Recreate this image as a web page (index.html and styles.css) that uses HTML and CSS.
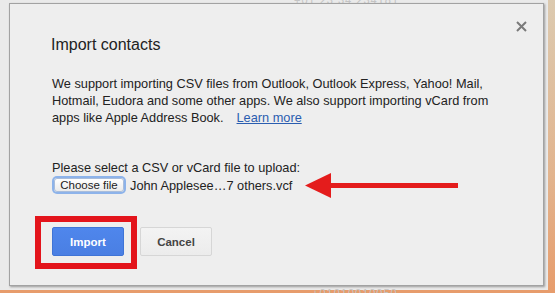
FILE: index.html
```html
<!DOCTYPE html>
<html lang="en">
<head>
<meta charset="utf-8">
<title>Import contacts</title>
<link rel="stylesheet" href="styles.css">
</head>
<body>
<div class="screen">
  <div class="canvas">
    <div class="bg-text bg-top">+01 23 34 234181</div>
    <div class="bg-text bg-bottom">+01010010050</div>
  </div>
  <div class="edge"></div>

  <div class="dialog" role="dialog" aria-labelledby="dlg-title">
    <div class="head">
      <h1 id="dlg-title" class="title">Import contacts</h1>
      <button class="close" aria-label="Close">
        <svg viewBox="0 0 11 11" width="11" height="11"><path d="M1 1 L10 10 M10 1 L1 10" stroke="#7a7a7a" stroke-width="2" fill="none"/></svg>
      </button>
    </div>
    <p class="desc">We support importing CSV files from Outlook, Outlook Express, Yahoo! Mail, Hotmail, Eudora and some other apps. We also support importing vCard from apps like Apple Address Book.<span class="spacer"></span><a class="learn" href="#">Learn more</a></p>
    <p class="select-label">Please select a CSV or vCard file to upload:</p>
    <div class="file-row">
      <span class="choose">Choose file</span>
      <span class="file-name">John Applesee…7 others.vcf</span>
    </div>
    <div class="actions">
      <button class="btn btn-primary">Import</button>
      <button class="btn btn-default">Cancel</button>
    </div>

    <div class="mark-box"></div>
    <svg class="mark-arrow" viewBox="0 0 165 32" width="165" height="32">
      <polygon points="5,16.5 31,4 31,29" fill="#e41c1c"/>
      <rect x="29" y="14" width="129" height="5" fill="#e41c1c"/>
    </svg>
  </div>
</div>
</body>
</html>
```

FILE: styles.css
```css
* { box-sizing: border-box; }

html, body {
  margin: 0;
  padding: 0;
  background: #e9e9e9;
}

.screen {
  position: relative;
  width: 555px;
  height: 293px;
  display: flex;
  overflow: hidden;
  font-family: "Liberation Sans", Arial, sans-serif;
}

.canvas {
  flex: 1;
  display: flex;
  flex-direction: column;
  justify-content: space-between;
  background: #eaeaea;
  border-bottom: 3px solid #e79c6c;
}

.edge {
  width: 7px;
  background: linear-gradient(to bottom, #dccab0 0%, #e2b48e 60%, #e79c6c 100%);
}

.bg-text {
  color: #c4c4c4;
  font-size: 11px;
  letter-spacing: 1px;
  padding-left: 294px;
}

.bg-top {
  margin-top: -6px;
}

.bg-bottom {
  padding-left: 312px;
  margin-bottom: -9px;
}

.dialog {
  position: absolute;
  left: 9px;
  top: 3px;
  width: 535px;
  height: 283px;
  background: rgba(237, 237, 237, 0.96);
  border: 1px solid #a2a2a2;
  box-shadow: 1px 1px 2px rgba(0, 0, 0, 0.35);
  padding: 0 16px 0 42px;
  color: #222;
}

.head {
  display: flex;
  justify-content: space-between;
  align-items: flex-start;
}

.title {
  margin: 31px 0 0 -1px;
  font-size: 16px;
  line-height: 20px;
  font-weight: normal;
  color: #222;
}

.close {
  margin-top: 17px;
  width: 11px;
  height: 11px;
  padding: 0;
  border: 0;
  background: none;
  display: flex;
}

.desc {
  margin: 20px 0 0 0;
  width: 455px;
  font-size: 12.75px;
  line-height: 17px;
}

.spacer {
  display: inline-block;
  width: 13px;
}

.learn {
  color: #2a5db0;
  text-decoration: underline;
}

.select-label {
  margin: 33px 0 0 0;
  font-size: 12.75px;
  line-height: 17px;
}

.file-row {
  display: flex;
  align-items: center;
  gap: 4px;
  height: 18px;
}

.choose {
  margin-left: 2px;
  width: 70px;
  height: 14px;
  display: flex;
  align-items: center;
  justify-content: center;
  font-size: 11.5px;
  color: #222;
  background: linear-gradient(to bottom, #ffffff, #ebebeb);
  border: 1px solid #a9bddb;
  border-radius: 3px;
  box-shadow: 0 0 0 2px #8db3ea;
}

.file-name {
  margin-left: 2px;
  font-size: 12.75px;
  line-height: 17px;
}

.actions {
  margin-top: 33px;
  display: flex;
  gap: 16px;
}

.btn {
  width: 72px;
  height: 29px;
  font-family: "Liberation Sans", Arial, sans-serif;
  font-size: 11.5px;
  font-weight: bold;
  border-radius: 2px;
  padding: 0;
}

.btn-primary {
  color: #fff;
  background: linear-gradient(to bottom, #4f86ec, #4a7fe3);
  border: 1px solid #3f74d6;
}

.btn-default {
  color: #444;
  background: linear-gradient(to bottom, #f3f3f3, #ececec);
  border: 1px solid #d6d6d6;
}

.mark-box {
  position: absolute;
  left: 25px;
  top: 212px;
  width: 102px;
  height: 53px;
  border: 6px solid #e3141b;
}

.mark-arrow {
  position: absolute;
  left: 290px;
  top: 165px;
}
```
